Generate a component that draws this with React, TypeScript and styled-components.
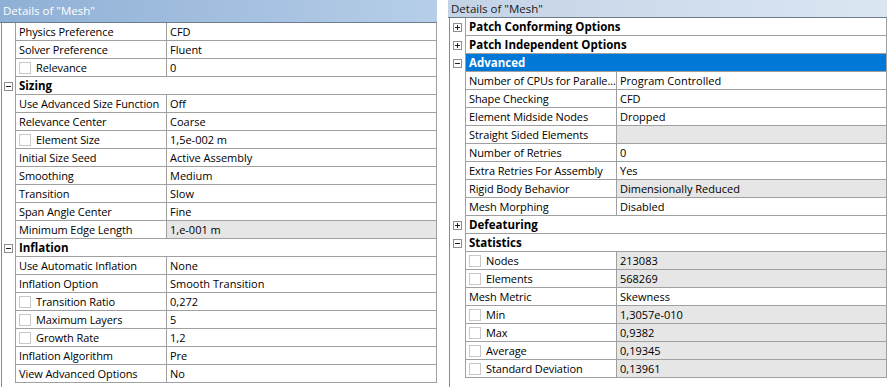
import styled, { createGlobalStyle } from 'styled-components';

type Row =
  | { kind: 'group'; label: string; open: boolean; selected?: boolean }
  | { kind: 'prop'; label: string; value: string; check?: boolean; readOnly?: boolean };

const leftRows: Row[] = [
  { kind: 'prop', label: 'Physics Preference', value: 'CFD' },
  { kind: 'prop', label: 'Solver Preference', value: 'Fluent' },
  { kind: 'prop', label: 'Relevance', value: '0', check: true },
  { kind: 'group', label: 'Sizing', open: true },
  { kind: 'prop', label: 'Use Advanced Size Function', value: 'Off' },
  { kind: 'prop', label: 'Relevance Center', value: 'Coarse' },
  { kind: 'prop', label: 'Element Size', value: '1,5e-002 m', check: true },
  { kind: 'prop', label: 'Initial Size Seed', value: 'Active Assembly' },
  { kind: 'prop', label: 'Smoothing', value: 'Medium' },
  { kind: 'prop', label: 'Transition', value: 'Slow' },
  { kind: 'prop', label: 'Span Angle Center', value: 'Fine' },
  { kind: 'prop', label: 'Minimum Edge Length', value: '1,e-001 m', readOnly: true },
  { kind: 'group', label: 'Inflation', open: true },
  { kind: 'prop', label: 'Use Automatic Inflation', value: 'None' },
  { kind: 'prop', label: 'Inflation Option', value: 'Smooth Transition' },
  { kind: 'prop', label: 'Transition Ratio', value: '0,272', check: true },
  { kind: 'prop', label: 'Maximum Layers', value: '5', check: true },
  { kind: 'prop', label: 'Growth Rate', value: '1,2', check: true },
  { kind: 'prop', label: 'Inflation Algorithm', value: 'Pre' },
  { kind: 'prop', label: 'View Advanced Options', value: 'No' },
];

const rightRows: Row[] = [
  { kind: 'group', label: 'Patch Conforming Options', open: false },
  { kind: 'group', label: 'Patch Independent Options', open: false },
  { kind: 'group', label: 'Advanced', open: true, selected: true },
  { kind: 'prop', label: 'Number of CPUs for Paralle...', value: 'Program Controlled' },
  { kind: 'prop', label: 'Shape Checking', value: 'CFD' },
  { kind: 'prop', label: 'Element Midside Nodes', value: 'Dropped' },
  { kind: 'prop', label: 'Straight Sided Elements', value: '', readOnly: true },
  { kind: 'prop', label: 'Number of Retries', value: '0' },
  { kind: 'prop', label: 'Extra Retries For Assembly', value: 'Yes' },
  { kind: 'prop', label: 'Rigid Body Behavior', value: 'Dimensionally Reduced', readOnly: true },
  { kind: 'prop', label: 'Mesh Morphing', value: 'Disabled' },
  { kind: 'group', label: 'Defeaturing', open: false },
  { kind: 'group', label: 'Statistics', open: true },
  { kind: 'prop', label: 'Nodes', value: '213083', check: true, readOnly: true },
  { kind: 'prop', label: 'Elements', value: '568269', check: true, readOnly: true },
  { kind: 'prop', label: 'Mesh Metric', value: 'Skewness' },
  { kind: 'prop', label: 'Min', value: '1,3057e-010', check: true, readOnly: true },
  { kind: 'prop', label: 'Max', value: '0,9382', check: true, readOnly: true },
  { kind: 'prop', label: 'Average', value: '0,19345', check: true, readOnly: true },
  { kind: 'prop', label: 'Standard Deviation', value: '0,13961', check: true, readOnly: true },
];

const GlobalStyle = createGlobalStyle`
  html, body {
    margin: 0;
    padding: 0;
    background: #ffffff;
  }
  body {
    font-family: "Open Sans", "Noto Sans", sans-serif;
    font-size: 11px;
    color: #000000;
  }
`;

const Screen = styled.div`
  display: flex;
  width: 893px;
  height: 387px;
  overflow: hidden;
  background: #ffffff;
`;

const Panel = styled.div<{ $width: number; $ml: number }>`
  width: ${p => p.$width}px;
  margin-left: ${p => p.$ml}px;
  display: flex;
  flex-direction: column;
`;

const TitleBar = styled.div<{ $active: boolean }>`
  height: ${p => (p.$active ? 22 : 17)}px;
  line-height: ${p => (p.$active ? 22 : 17)}px;
  padding-left: 3px;
  font-size: 11.5px;
  color: ${p => (p.$active ? '#ffffff' : '#1a1a1a')};
  background: ${p =>
    p.$active
      ? 'linear-gradient(to right, #8fb0d6, #b6cee8)'
      : 'linear-gradient(to right, #c3d3e6, #dbe6f2)'};
  border-bottom: 1px solid #6f7c8a;
  white-space: nowrap;
`;

const Body = styled.div<{ $gutter: number }>`
  flex: 1;
  border-left: 1px solid #8a8a8a;
  margin-left: 1px;
  --gutter: ${p => p.$gutter}px;
`;

const RowLine = styled.div`
  display: flex;
  height: 18px;
`;

const Gutter = styled.div`
  width: var(--gutter);
  flex: none;
  display: flex;
  align-items: center;
  justify-content: center;
`;

const Expander = styled.div`
  width: 9px;
  height: 9px;
  box-sizing: border-box;
  border: 1px solid #8e8e8e;
  background: #ffffff;
  position: relative;
  margin-left: -1px;

  &::before {
    content: '';
    position: absolute;
    left: 1px;
    top: 3px;
    width: 5px;
    height: 1px;
    background: #202020;
  }
`;

const ExpanderPlus = styled(Expander)`
  &::after {
    content: '';
    position: absolute;
    left: 3px;
    top: 1px;
    width: 1px;
    height: 5px;
    background: #202020;
  }
`;

const Cells = styled.div<{ $selected?: boolean }>`
  flex: 1;
  display: flex;
  border-left: 1px solid #a0a0a0;
  border-right: 1px solid #a0a0a0;
  border-bottom: 1px solid #a0a0a0;
  background: ${p => (p.$selected ? '#0078d7' : '#ffffff')};
  color: ${p => (p.$selected ? '#ffffff' : '#000000')};
`;

const GroupLabel = styled.div`
  font-weight: 700;
  font-size: 11.5px;
  padding: 1px 0 0 3px;
  line-height: 16px;
  white-space: nowrap;
`;

const LabelCell = styled.div`
  width: 151px;
  flex: none;
  display: flex;
  align-items: center;
  padding: 1px 0 0 3px;
  box-sizing: border-box;
  border-right: 1px solid #a0a0a0;
  white-space: nowrap;
  overflow: hidden;
  line-height: 16px;
  letter-spacing: -0.1px;
`;

const ValueCell = styled.div<{ $readOnly?: boolean }>`
  flex: 1;
  padding: 1px 0 0 3px;
  line-height: 16px;
  white-space: nowrap;
  overflow: hidden;
  background: ${p => (p.$readOnly ? '#e6e6e6' : 'transparent')};
`;

const CheckBox = styled.span`
  width: 12px;
  height: 12px;
  box-sizing: border-box;
  border: 1px solid #c8c8c8;
  background: #ffffff;
  flex: none;
  margin: -1px 5px 0 0;
`;

function PropertyGrid({ rows, gutter }: { rows: Row[]; gutter: number }) {
  return (
    <Body $gutter={gutter}>
      {rows.map(row =>
        row.kind === 'group' ? (
          <RowLine key={row.label}>
            <Gutter>{row.open ? <Expander /> : <ExpanderPlus />}</Gutter>
            <Cells $selected={row.selected}>
              <GroupLabel>{row.label}</GroupLabel>
            </Cells>
          </RowLine>
        ) : (
          <RowLine key={row.label}>
            <Gutter />
            <Cells>
              <LabelCell>
                {row.check && <CheckBox />}
                {row.label}
              </LabelCell>
              <ValueCell $readOnly={row.readOnly}>{row.value}</ValueCell>
            </Cells>
          </RowLine>
        )
      )}
    </Body>
  );
}

export default function App() {
  return (
    <>
      <GlobalStyle />
      <Screen>
        <Panel $width={437} $ml={0}>
          <TitleBar $active>Details of "Mesh"</TitleBar>
          <PropertyGrid rows={leftRows} gutter={13} />
        </Panel>
        <Panel $width={439} $ml={11}>
          <TitleBar $active={false}>Details of "Mesh"</TitleBar>
          <PropertyGrid rows={rightRows} gutter={15} />
        </Panel>
      </Screen>
    </>
  );
}
